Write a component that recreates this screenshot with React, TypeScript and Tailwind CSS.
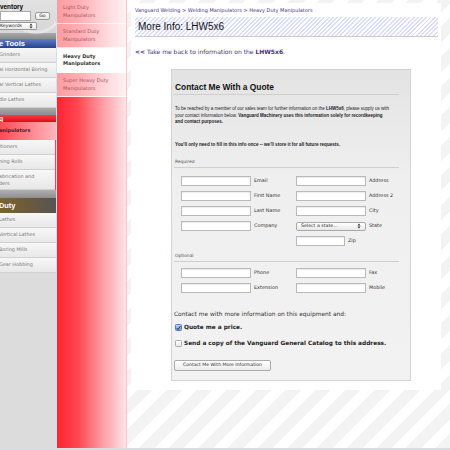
import React from "react";

const SIDE_TOOLS = ["Grinders", "al Horizontal Boring", "al Vertical Lathes", "dle Lathes"];
const SIDE_WELD = ["itioners", "ning Rolls"];
const SIDE_HEAVY = ["Lathes", "Vertical Lathes", "Boring Mills", "Gear Hobbing"];

const SUBNAV = [
  { label: ["Light Duty", "Manipulators"], active: false },
  { label: ["Standard Duty", "Manipulators"], active: false },
  { label: ["Heavy Duty", "Manipulators"], active: true },
  { label: ["Super Heavy Duty", "Manipulators"], active: false },
];

function Arrows() {
  return (
    <svg width="4" height="6" viewBox="0 0 4 6" className="shrink-0">
      <path d="M0.5 2.4 L2 0.6 L3.5 2.4 Z M0.5 3.6 L2 5.4 L3.5 3.6 Z" fill="#333" />
    </svg>
  );
}

function SideItem({ text }: { text: string }) {
  return (
    <div className="flex h-[15px] items-center border-b border-[#d0d0d0] bg-[linear-gradient(#f7f7f7,#e8e8e8)] pl-0 text-[4.9px] text-[#777]">
      <span className="-ml-[1px] whitespace-nowrap">{text}</span>
    </div>
  );
}

function Sidebar() {
  return (
    <aside className="flex h-full w-[57px] shrink-0 flex-col overflow-hidden border-r border-[#d3e3ec] bg-[#dcdcdc] font-['DejaVu_Sans',Verdana,sans-serif]">
      <div className="relative h-[33px] bg-[linear-gradient(#e2e2e2,#d6d6d6)]">
        <div className="absolute -top-[22px] left-[8px] h-[56px] w-[56px] rounded-full border-[3px] border-white/40" />
        <div className="relative pt-[4px] font-['Liberation_Sans',Arial,sans-serif] text-[6.4px] font-bold leading-[6px] text-black">ventory</div>
        <div className="relative mt-[1px] flex items-center gap-[4px]">
          <input className="h-[10px] w-[31px] border border-[#aaa] bg-white" />
          <div className="flex h-[8px] w-[15px] items-center justify-center rounded-[2px] border border-[#999] bg-[linear-gradient(#fff,#e6e6e6)] text-[4.6px] text-[#222]">Go</div>
        </div>
        <div className="relative mt-[1px] flex h-[8px] w-[37px] items-center justify-between rounded-r-[2px] border border-l-0 border-[#999] bg-[linear-gradient(#fff,#e9e9e9)] pr-[3px] text-[4.6px] text-[#222]">
          <span>Keywords</span>
          <Arrows />
        </div>
      </div>
      <div className="h-[6px] bg-[linear-gradient(#a9a9a9,#8b8b8b)]" />
      <div className="flex h-[9px] items-center bg-[linear-gradient(#5f7cc4,#26438f)] font-['Liberation_Sans',Arial,sans-serif] text-[7.6px] font-bold text-white">
        <span className="-ml-[1px]">e Tools</span>
      </div>
      {SIDE_TOOLS.map((t) => (
        <SideItem key={t} text={t} />
      ))}
      <div className="h-[7px] bg-[linear-gradient(#a9a9a9,#8b8b8b)]" />
      <div className="flex h-[7px] items-center bg-[linear-gradient(#ff3b44,#d80d18)] font-['Liberation_Sans',Arial,sans-serif] text-[7px] font-bold leading-none text-white">
        <span className="-ml-[1px]">g</span>
      </div>
      <div className="flex h-[18px] items-center bg-[linear-gradient(to_right,#ff4a55,#ff8c94_60%,#ffb4ba)] text-[4.9px] font-bold text-[#3b2225]">
        <span className="-ml-[1px]">anipulators</span>
      </div>
      <div className="border-r border-[#ff4050]">
        {SIDE_WELD.map((t) => (
          <SideItem key={t} text={t} />
        ))}
        <div className="flex h-[20px] flex-col justify-center border-b border-[#d0d0d0] bg-[linear-gradient(#f7f7f7,#e8e8e8)] text-[4.9px] leading-[7px] text-[#777]">
          <span className="-ml-[1px]">abrication and</span>
          <span className="-ml-[1px]">ders</span>
        </div>
      </div>
      <div className="h-[8px] bg-[linear-gradient(#b0b0b0,#8e8e8e)]" />
      <div className="flex h-[15px] items-center bg-[linear-gradient(to_right,#7a6434,#6b5a3c_50%,#555)] font-['Liberation_Sans',Arial,sans-serif] text-[7.4px] font-bold text-white">
        <span className="-ml-[1px]">Duty</span>
      </div>
      {SIDE_HEAVY.map((t) => (
        <SideItem key={t} text={t} />
      ))}
    </aside>
  );
}

function SubNav() {
  return (
    <nav className="flex h-full w-[70px] shrink-0 flex-col border-r border-[#ffc2c8] bg-[linear-gradient(to_right,#ff2530,#ff4651_30%,#ff9aa2_65%,#ffe3e6)] font-['DejaVu_Sans',Verdana,sans-serif]">
      {SUBNAV.map((item) => (
        <div
          key={item.label.join(" ")}
          className={
            item.active
              ? "flex h-[25px] flex-col justify-center border-b border-white bg-white pl-[6px] text-[5px] font-bold leading-[7.5px] text-[#333]"
              : "flex h-[24px] flex-col justify-center border-b border-white/70 bg-white/55 pl-[6px] text-[5px] leading-[7.5px] text-[#a8555e]"
          }
        >
          {item.label.map((l) => (
            <span key={l} className="whitespace-nowrap">{l}</span>
          ))}
        </div>
      ))}
    </nav>
  );
}

function Field({ label, width = "w-[70px]" }: { label: string; width?: string }) {
  return (
    <div className="flex h-[10px] items-center gap-[3px]">
      <input className={`h-[10px] ${width} border border-[#b9b9b9] bg-white shadow-[inset_0_1px_1px_rgba(0,0,0,0.08)]`} />
      <span className="text-[4.9px] text-[#333]">{label}</span>
    </div>
  );
}

function Checkbox({ checked }: { checked?: boolean }) {
  return checked ? (
    <span className="flex h-[7px] w-[7px] shrink-0 items-center justify-center rounded-[1.5px] border border-[#5b7bb5] bg-[linear-gradient(#bcd4f6,#6e9be0)]">
      <svg width="6" height="6" viewBox="0 0 6 6">
        <path d="M1 3.2 L2.4 4.8 L5.4 0.6" fill="none" stroke="#1a2a4a" strokeWidth="1.1" />
      </svg>
    </span>
  ) : (
    <span className="h-[7px] w-[7px] shrink-0 rounded-[1.5px] border border-[#aaa] bg-[linear-gradient(#fff,#eaeaea)]" />
  );
}

function QuoteForm() {
  return (
    <div className="ml-[40px] mt-[14px] h-[312px] w-[240px] border border-[#d3d3d3] bg-[linear-gradient(#e3e3e3,#efefef_35%,#f2f2f2)] px-[2px] font-['DejaVu_Sans',Verdana,sans-serif] text-[#222]">
      <div className="mr-[9px] mt-[12px] border-b border-[#cfcfcf] pb-[2px] pl-[1px] font-['Liberation_Sans',Arial,sans-serif] text-[8.4px] font-bold leading-[10px] text-[#111]">
        Contact Me With a Quote
      </div>
      <p className="mt-[11px] pl-[1px] font-['Liberation_Sans',Arial,sans-serif] text-[4.5px] leading-[6.5px] text-[#222]">
        To be reached by a member of our sales team for further information on the <b>LHW5x6</b>, please supply us with
        <br />
        your contact information below. <b>Vanguard Machinery uses this information solely for recordkeeping</b>
        <br />
        <b>and contact purposes.</b>
      </p>
      <p className="mt-[16px] pl-[1px] font-['Liberation_Sans',Arial,sans-serif] text-[4.6px] font-bold leading-[6.5px]">
        You'll only need to fill in this info once -- we'll store it for all future requests.
      </p>
      <div className="mr-[9px] mt-[11px] border-b border-[#cfcfcf] pb-[2px] pl-[1px] text-[4.4px] leading-[6px] text-[#555]">Required</div>
      <div className="mt-[8px] grid grid-cols-[115px_1fr] gap-y-[5px] pl-[7px]">
        <Field label="Email" />
        <Field label="Address" />
        <Field label="First Name" />
        <Field label="Address 2" />
        <Field label="Last Name" />
        <Field label="City" />
        <Field label="Company" />
        <div className="flex h-[10px] items-center gap-[3px]">
          <div className="flex h-[9px] w-[70px] items-center justify-between rounded-[2px] border border-[#a9a9a9] bg-[linear-gradient(#fff,#e8e8e8)] px-[4px] text-[4.7px] text-[#222]">
            <span>Select a state...</span>
            <Arrows />
          </div>
          <span className="text-[4.9px] text-[#333]">State</span>
        </div>
        <div />
        <Field label="Zip" width="w-[49px]" />
      </div>
      <div className="mr-[9px] mt-[7px] border-b border-[#cfcfcf] pb-[2px] pl-[1px] text-[4.4px] leading-[6px] text-[#555]">Optional</div>
      <div className="mt-[6px] grid grid-cols-[115px_1fr] gap-y-[5px] pl-[7px]">
        <Field label="Phone" />
        <Field label="Fax" />
        <Field label="Extension" />
        <Field label="Mobile" />
      </div>
      <div className="mt-[18px] text-[5.9px] leading-[7px] text-[#333]">
        Contact me with more information on this equipment and:
      </div>
      <div className="mt-[6px] flex items-center gap-[2px] pl-[1px] text-[5.8px] font-bold leading-[7px]">
        <Checkbox checked />
        <span>Quote me a price.</span>
      </div>
      <div className="mt-[9px] flex items-center gap-[2px] pl-[1px] text-[5.8px] font-bold leading-[7px]">
        <Checkbox />
        <span className="whitespace-nowrap">Send a copy of the Vanguard General Catalog to this address.</span>
      </div>
      <button className="mt-[13px] flex h-[11px] w-[97px] items-center justify-center rounded-[2px] border border-[#aaa] bg-[linear-gradient(#fff,#ececec)] text-[4.6px] text-[#222]">
        Contact Me With More Information
      </button>
    </div>
  );
}

function Content() {
  return (
    <main className="h-full flex-1 bg-[repeating-linear-gradient(135deg,#ffffff_0px,#ffffff_10px,#f3f3f3_10px,#f3f3f3_21px)]">
      <div className="ml-[4px] mt-[3px] h-[387px] w-[310px] bg-white pt-[4px]">
        <div className="pl-[4px] font-['DejaVu_Sans',Verdana,sans-serif] text-[5px] leading-[6px] text-[#4b2d86]">
          Vanguard Welding &gt; Welding Manipulators &gt; Heavy Duty Manipulators
        </div>
        <div className="ml-[4px] mt-[4px] h-[20px] w-[303px] border-b border-[#cdcdcd] bg-[repeating-linear-gradient(135deg,#ffffff_0px,#ffffff_1.6px,#d9ddfb_1.6px,#d9ddfb_3px)] pl-[3px] font-['Liberation_Sans',Arial,sans-serif] text-[10px] leading-[19px] text-[#111]">
          More Info: LHW5x6
        </div>
        <div className="mt-[11px] pl-[4px] font-['DejaVu_Sans',Verdana,sans-serif] text-[6px] leading-[7px] text-[#4b2d86]">
          <b>&lt;&lt;</b> Take me back to information on the <b>LHW5x6</b>.
        </div>
        <QuoteForm />
      </div>
    </main>
  );
}

export default function App() {
  return (
    <div className="flex h-[450px] w-[450px] flex-col overflow-hidden bg-white">
      <div className="flex h-[448px]">
        <Sidebar />
        <SubNav />
        <Content />
      </div>
      <div className="h-[2px] bg-[#d9dde0]" />
    </div>
  );
}
